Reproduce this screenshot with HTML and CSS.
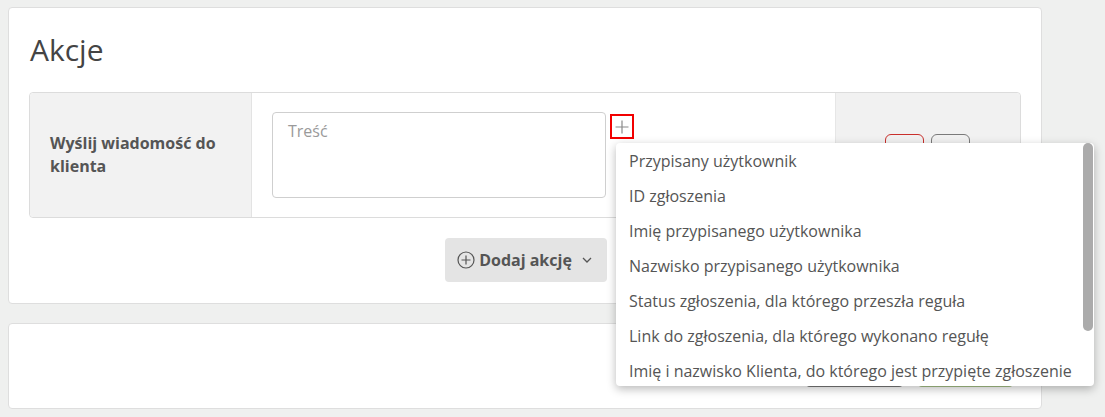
FILE: index.html
```html
<!DOCTYPE html>
<html>
<head>
<meta charset="utf-8">
<title>Akcje</title>
<link rel="stylesheet" href="styles.css">
</head>
<body>
<div class="page">
  <section class="card card-actions">
    <h1 class="card-title">Akcje</h1>

    <div class="action-row">
      <div class="action-name">Wyślij wiadomość do klienta</div>
      <div class="action-body">
        <div class="field-wrap">
          <textarea class="field" placeholder="Treść"></textarea>
          <button class="insert-btn" type="button" aria-label="Wstaw zmienną">
            <svg width="14" height="14" viewBox="0 0 14 14"><path d="M7 0.5V13.5M0.5 7H13.5" stroke="#8a8a8a" stroke-width="1.2" fill="none"/></svg>
          </button>

          <div class="var-menu">
            <ul class="var-list">
              <li>Przypisany użytkownik</li>
              <li>ID zgłoszenia</li>
              <li>Imię przypisanego użytkownika</li>
              <li>Nazwisko przypisanego użytkownika</li>
              <li>Status zgłoszenia, dla którego przeszła reguła</li>
              <li>Link do zgłoszenia, dla którego wykonano regułę</li>
              <li>Imię i nazwisko Klienta, do którego jest przypięte zgłoszenie</li>
            </ul>
            <div class="var-scroll"><div class="var-thumb"></div></div>
          </div>
        </div>
      </div>
      <div class="action-tools">
        <button class="tool tool-danger" type="button"></button>
        <button class="tool" type="button"></button>
      </div>
    </div>

    <div class="add-line">
      <button class="add-btn" type="button">
        <svg width="18" height="18" viewBox="0 0 18 18"><circle cx="9" cy="9" r="8" stroke="#555" stroke-width="1.2" fill="none"/><path d="M9 4.5V13.5M4.5 9H13.5" stroke="#555" stroke-width="1.2"/></svg>
        <span>Dodaj akcję</span>
        <svg class="chev" width="12" height="12" viewBox="0 0 12 12"><path d="M2 4L6 8L10 4" stroke="#555" stroke-width="1.3" fill="none"/></svg>
      </button>
    </div>
  </section>

  <section class="card card-footer">
    <button class="foot-btn foot-cancel" type="button"></button>
    <button class="foot-btn foot-save" type="button"></button>
  </section>
</div>
</body>
</html>
```

FILE: styles.css
```css
body {
  margin: 0;
  background-color: #eff0ef;
  font-family: "Open Sans", "Noto Sans", sans-serif;
  color: #555;
  font-size: 16px;
}

.page {
  width: 1034px;
  padding: 7px 0 0 8px;
  display: flex;
  flex-direction: column;
  gap: 19px;
}

.card {
  background: #fff;
  border: 1px solid #dedede;
  border-radius: 4px;
}

.card-actions {
  padding: 24px 20px 21px 20px;
}

.card-title {
  margin: 0 0 24px 1px;
  font-size: 30px;
  line-height: 36px;
  font-weight: 400;
  color: #444;
}

/* one action */
.action-row {
  display: flex;
  height: 124px;
  border: 1px solid #dcdcdc;
  border-radius: 4px;
}

.action-name {
  width: 201px;
  flex: none;
  padding: 0 0 0 20px;
  background: #f2f2f2;
  border-radius: 4px 0 0 4px;
  display: flex;
  align-items: center;
  font-weight: 700;
  line-height: 23px;
  color: #555;
}

.action-body {
  flex: 1;
  border-left: 1px solid #e3e3e3;
  padding: 19px 20px 0 20px;
}

.field-wrap {
  position: relative;
  display: flex;
  align-items: flex-start;
}

.field {
  width: 334px;
  height: 86px;
  box-sizing: border-box;
  border: 1px solid #cfcfcf;
  border-radius: 4px;
  padding: 7px 15px;
  font-family: inherit;
  font-size: 16px;
  color: #555;
  resize: none;
  outline: none;
}

.field::placeholder {
  color: #9a9a9a;
}

.insert-btn {
  margin: 2px 0 0 4px;
  width: 24px;
  height: 25px;
  box-sizing: border-box;
  border: 2px solid #f20000;
  background: #fff;
  padding: 0;
  display: flex;
  align-items: center;
  justify-content: center;
}

.action-tools {
  width: 182px;
  flex: none;
  background: #f1f1f1;
  border-left: 1px solid #e6e6e6;
  border-radius: 0 4px 4px 0;
  display: flex;
  align-items: center;
  justify-content: center;
  gap: 7px;
  padding-right: 2px;
}

.tool {
  width: 39px;
  height: 42px;
  border: 1px solid #7a7a7a;
  border-radius: 6px;
  background: transparent;
}

.tool-danger {
  border-color: #c9302c;
}

.add-line {
  display: flex;
  justify-content: center;
  padding-top: 20px;
  margin-left: 2px;
}

.add-btn {
  height: 44px;
  width: 162px;
  border: none;
  border-radius: 4px;
  background: #e4e4e4;
  display: flex;
  align-items: center;
  justify-content: center;
  gap: 4px;
  font-family: inherit;
  font-size: 16px;
  font-weight: 700;
  color: #555;
  padding: 0 2px 0 0;
}

.add-btn .chev {
  margin-left: 5px;
}

/* variable picker */
.var-menu {
  position: absolute;
  left: 344px;
  top: 31px;
  width: 478px;
  height: 243px;
  background: #fff;
  border-radius: 4px;
  box-shadow: 0 3px 10px rgba(0, 0, 0, 0.28);
  overflow: hidden;
  z-index: 5;
}

.var-list {
  margin: 0;
  padding: 1px 0 0 0;
  list-style: none;
}

.var-list li {
  height: 35px;
  line-height: 35px;
  padding-left: 13px;
  white-space: nowrap;
  color: #555;
}

.var-scroll {
  position: absolute;
  top: 0;
  right: 1px;
  width: 10px;
  height: 100%;
}

.var-thumb {
  height: 188px;
  background: #ababab;
  border-radius: 5px;
}

.card-footer {
  height: 86px;
  display: flex;
  align-items: flex-end;
  justify-content: flex-end;
  gap: 15px;
  padding: 0 28px 21px 0;
  box-sizing: border-box;
}

.foot-btn {
  height: 40px;
  border: none;
  border-radius: 4px;
}

.foot-cancel {
  width: 97px;
  background: #7a7a7a;
}

.foot-save {
  width: 95px;
  background: #a8c389;
}
```
